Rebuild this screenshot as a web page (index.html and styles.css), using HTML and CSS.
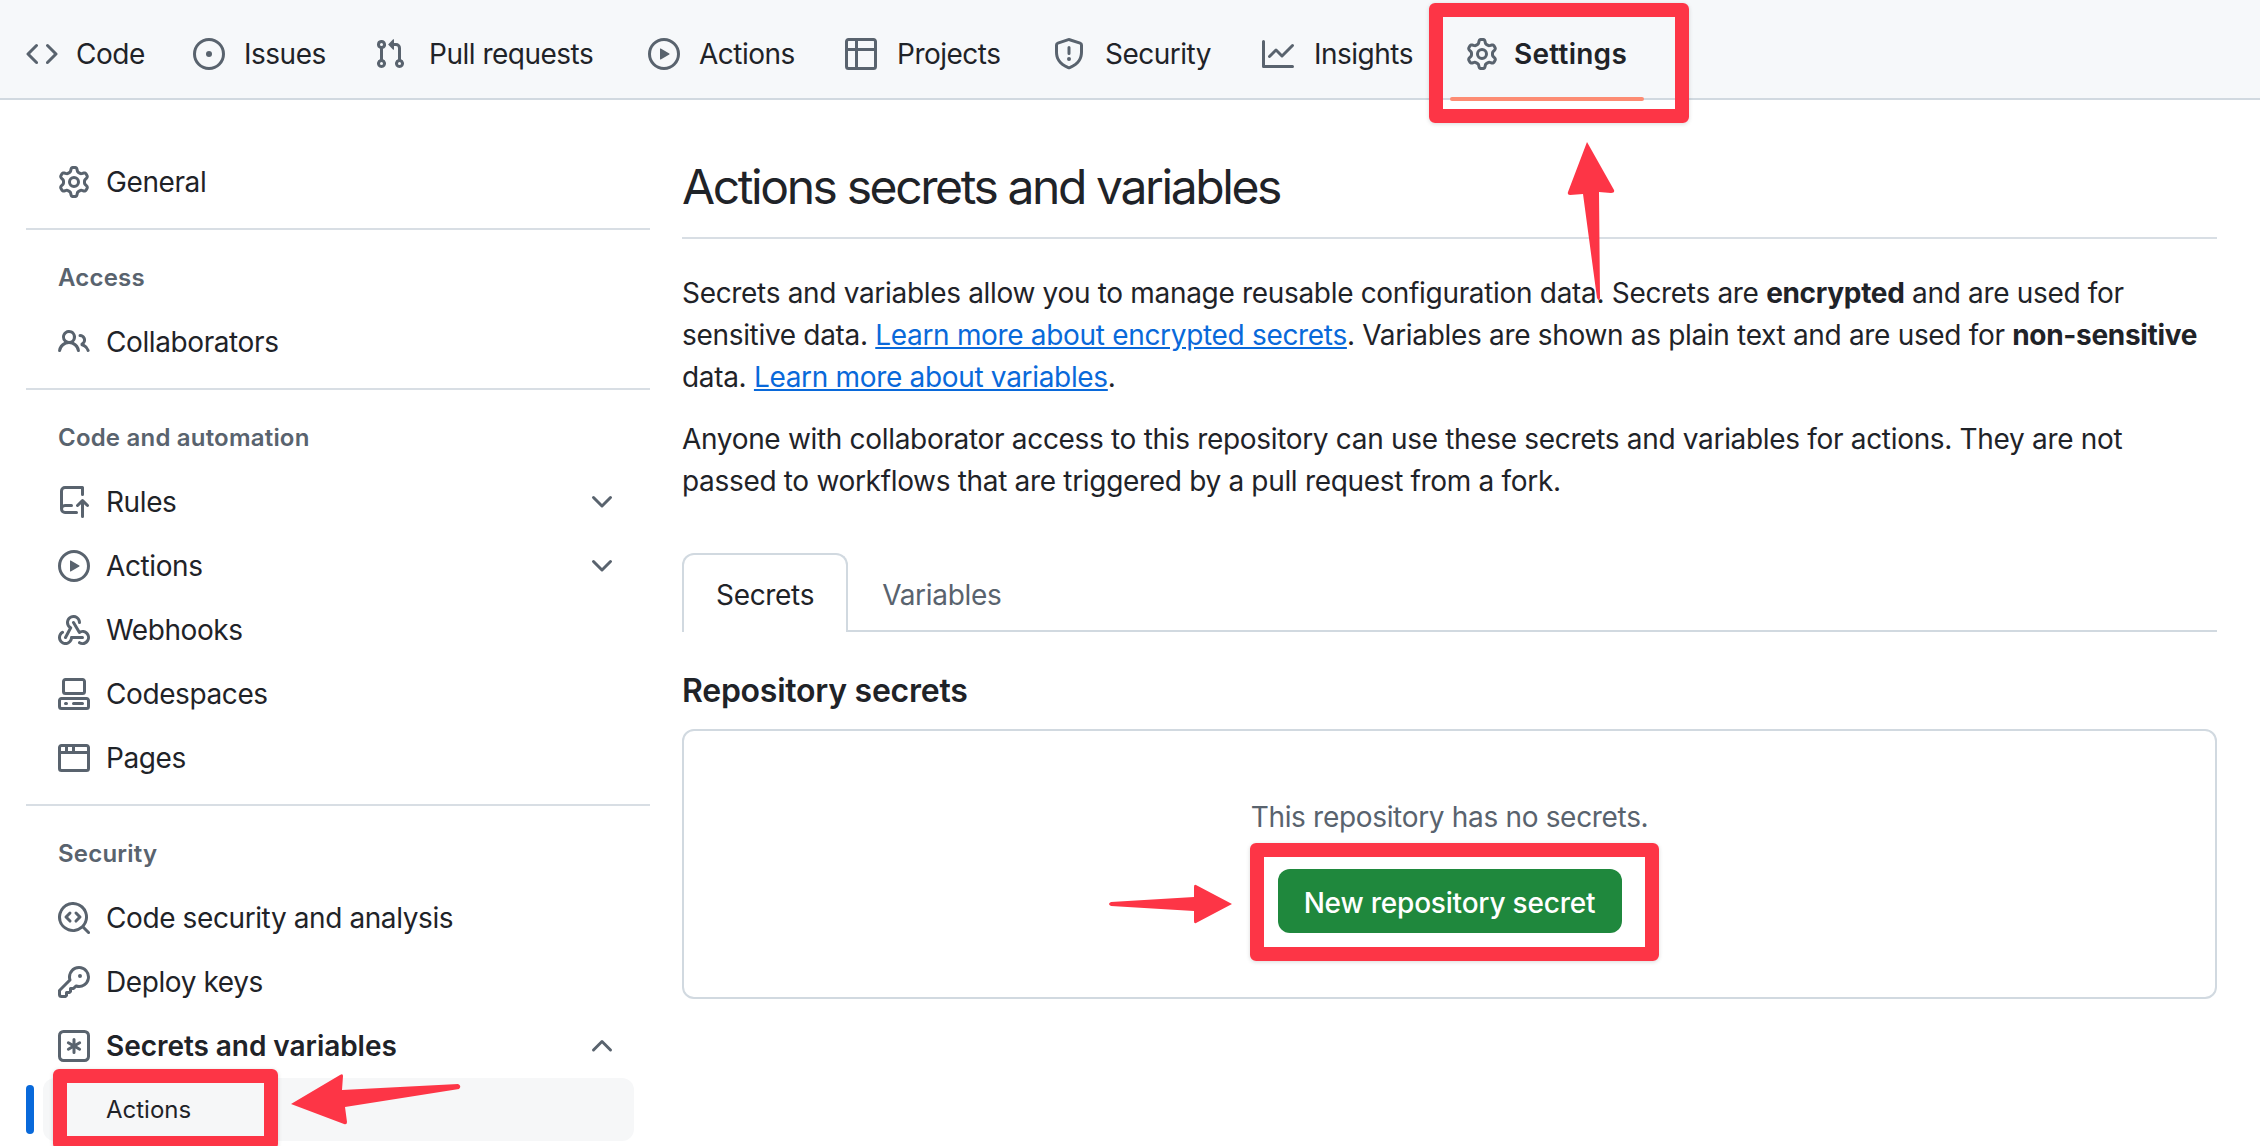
FILE: index.html
```html
<!DOCTYPE html>
<html lang="en">
<head>
    <meta charset="UTF-8">
    <title>Actions secrets and variables</title>
    <link rel="stylesheet" href="styles.css">
</head>
<body>
    <svg class="sprite" xmlns="http://www.w3.org/2000/svg">
        <symbol id="i-code" viewBox="0 0 16 16"><path d="M11.28 3.22a.75.75 0 0 0-1.06 1.06L13.94 8l-3.72 3.72a.749.749 0 0 0 .326 1.275.749.749 0 0 0 .734-.215l4.25-4.25a.75.75 0 0 0 0-1.06Zm-6.56 0a.751.751 0 0 1 1.042.018.751.751 0 0 1 .018 1.042L2.06 8l3.72 3.72a.749.749 0 0 1-.326 1.275.749.749 0 0 1-.734-.215L.47 8.53a.75.75 0 0 1 0-1.06Z"/></symbol>
        <symbol id="i-issue" viewBox="0 0 16 16"><path d="M8 9.5a1.5 1.5 0 1 0 0-3 1.5 1.5 0 0 0 0 3Z"/><path d="M8 0a8 8 0 1 1 0 16A8 8 0 0 1 8 0ZM1.5 8a6.5 6.5 0 1 0 13 0 6.5 6.5 0 0 0-13 0Z"/></symbol>
        <symbol id="i-pull" viewBox="0 0 16 16"><path d="M1.5 3.25a2.25 2.25 0 1 1 3 2.122v5.256a2.251 2.251 0 1 1-1.5 0V5.372A2.25 2.25 0 0 1 1.5 3.25Zm5.677-.177L9.573.677A.25.25 0 0 1 10 .854V2.5h1A2.5 2.5 0 0 1 13.5 5v5.628a2.251 2.251 0 1 1-1.5 0V5a1 1 0 0 0-1-1h-1v1.646a.25.25 0 0 1-.427.177L7.177 3.427a.25.25 0 0 1 0-.354ZM3.75 2.5a.75.75 0 1 0 0 1.5.75.75 0 0 0 0-1.5Zm0 9.5a.75.75 0 1 0 0 1.5.75.75 0 0 0 0-1.5Zm8.25.75a.75.75 0 1 0 1.5 0 .75.75 0 0 0-1.5 0Z"/></symbol>
        <symbol id="i-play" viewBox="0 0 16 16"><path d="M8 0a8 8 0 1 1 0 16A8 8 0 0 1 8 0ZM1.5 8a6.5 6.5 0 1 0 13 0 6.5 6.5 0 0 0-13 0Zm4.879-2.773 4.264 2.559a.25.25 0 0 1 0 .428l-4.264 2.559A.25.25 0 0 1 6 10.559V5.442a.25.25 0 0 1 .379-.215Z"/></symbol>
        <symbol id="i-table" viewBox="0 0 16 16"><path d="M0 1.75C0 .784.784 0 1.75 0h12.5C15.216 0 16 .784 16 1.75v12.5A1.75 1.75 0 0 1 14.25 16H1.75A1.75 1.75 0 0 1 0 14.25ZM6.5 6.5v8h7.75a.25.25 0 0 0 .25-.25V6.5Zm8-1.5V1.75a.25.25 0 0 0-.25-.25H6.5V5Zm-13 1.5v7.75c0 .138.112.25.25.25H5v-8ZM5 5V1.5H1.75a.25.25 0 0 0-.25.25V5Z"/></symbol>
        <symbol id="i-shield" viewBox="0 0 16 16"><path d="M7.467.133a1.748 1.748 0 0 1 1.066 0l5.25 1.68A1.75 1.75 0 0 1 15 3.48V7c0 1.566-.32 3.182-1.303 4.682-.983 1.498-2.585 2.813-5.032 3.855a1.697 1.697 0 0 1-1.33 0c-2.447-1.042-4.049-2.357-5.032-3.855C1.32 10.182 1 8.566 1 7V3.48a1.75 1.75 0 0 1 1.217-1.667Zm.61 1.429a.25.25 0 0 0-.153 0l-5.25 1.68a.25.25 0 0 0-.174.238V7c0 1.358.275 2.666 1.057 3.86.784 1.194 2.121 2.34 4.366 3.297a.196.196 0 0 0 .154 0c2.245-.956 3.582-2.104 4.366-3.298C13.225 9.666 13.5 8.36 13.5 7V3.48a.251.251 0 0 0-.174-.237l-5.25-1.68ZM8.75 4.75v3a.75.75 0 0 1-1.5 0v-3a.75.75 0 0 1 1.5 0ZM9 10.5a1 1 0 1 1-2 0 1 1 0 0 1 2 0Z"/></symbol>
        <symbol id="i-graph" viewBox="0 0 16 16"><path d="M1.5 1.75V13.5h13.75a.75.75 0 0 1 0 1.5H.75a.75.75 0 0 1-.75-.75V1.75a.75.75 0 0 1 1.5 0Zm14.28 2.53-5.25 5.25a.75.75 0 0 1-1.06 0L7 7.06 4.28 9.78a.751.751 0 0 1-1.042-.018.751.751 0 0 1-.018-1.042l3.25-3.25a.75.75 0 0 1 1.06 0L10 7.94l4.72-4.72a.751.751 0 0 1 1.042.018.751.751 0 0 1 .018 1.042Z"/></symbol>
        <symbol id="i-gear" viewBox="0 0 16 16"><path d="M8 0a8.2 8.2 0 0 1 .701.031C9.444.095 9.99.645 10.16 1.29l.288 1.107c.018.066.079.158.212.224.231.114.454.243.668.386.123.082.233.09.299.071l1.103-.303c.644-.176 1.392.021 1.82.63.27.385.506.792.704 1.218.315.675.111 1.422-.364 1.891l-.814.806c-.049.048-.098.147-.088.294.016.257.016.515 0 .772-.01.147.038.246.088.294l.814.806c.475.469.679 1.216.364 1.891a7.977 7.977 0 0 1-.704 1.217c-.428.61-1.176.807-1.82.63l-1.102-.302c-.067-.019-.177-.011-.3.071a5.909 5.909 0 0 1-.668.386c-.133.066-.194.158-.211.224l-.29 1.106c-.168.646-.715 1.196-1.458 1.26a8.006 8.006 0 0 1-1.402 0c-.743-.064-1.289-.614-1.458-1.26l-.289-1.106c-.018-.066-.079-.158-.212-.224a5.738 5.738 0 0 1-.668-.386c-.123-.082-.233-.09-.299-.071l-1.103.303c-.644.176-1.392-.021-1.82-.63a8.12 8.12 0 0 1-.704-1.218c-.315-.675-.111-1.422.363-1.891l.815-.806c.05-.048.098-.147.088-.294a6.214 6.214 0 0 1 0-.772c.01-.147-.038-.246-.088-.294l-.815-.806C.635 6.045.431 5.298.746 4.623a7.92 7.92 0 0 1 .704-1.217c.428-.61 1.176-.807 1.82-.63l1.102.302c.067.019.177.011.3-.071.214-.143.437-.272.668-.386.133-.066.194-.158.211-.224l.29-1.106C6.009.645 6.556.095 7.299.03 7.53.01 7.764 0 8 0Zm-.571 1.525c-.036.003-.108.036-.137.146l-.289 1.105c-.147.561-.549.967-.998 1.189-.173.086-.34.183-.5.29-.417.278-.97.423-1.529.27l-1.103-.303c-.109-.03-.175.016-.195.045-.22.312-.412.644-.573.99-.014.031-.021.11.059.19l.815.806c.411.406.562.957.53 1.456a4.709 4.709 0 0 0 0 .582c.032.499-.119 1.05-.53 1.456l-.815.806c-.081.08-.073.159-.059.19.162.346.353.677.573.989.02.03.085.076.195.046l1.102-.303c.56-.153 1.113-.008 1.53.27.161.107.328.204.501.29.447.222.85.629.997 1.189l.289 1.105c.029.109.101.143.137.146a6.6 6.6 0 0 0 1.142 0c.036-.003.108-.036.137-.146l.289-1.105c.147-.561.549-.967.998-1.189.173-.086.34-.183.5-.29.417-.278.97-.423 1.529-.27l1.103.303c.109.029.175-.016.195-.045.22-.313.411-.644.573-.99.014-.031.021-.11-.059-.19l-.815-.806c-.411-.406-.562-.957-.53-1.456a4.709 4.709 0 0 0 0-.582c-.032-.499.119-1.05.53-1.456l.815-.806c.081-.08.073-.159.059-.19a6.464 6.464 0 0 0-.573-.989c-.02-.03-.085-.076-.195-.046l-1.102.303c-.56.153-1.113.008-1.53-.27a4.44 4.44 0 0 0-.501-.29c-.447-.222-.85-.629-.997-1.189l-.289-1.105c-.029-.11-.101-.143-.137-.146a6.6 6.6 0 0 0-1.142 0ZM11 8a3 3 0 1 1-6 0 3 3 0 0 1 6 0ZM9.5 8a1.5 1.5 0 1 0-3.001.001A1.5 1.5 0 0 0 9.5 8Z"/></symbol>
        <symbol id="i-people" viewBox="0 0 16 16"><path d="M2 5.5a3.5 3.5 0 1 1 5.898 2.549 5.508 5.508 0 0 1 3.034 4.084.75.75 0 1 1-1.482.235 4 4 0 0 0-7.9 0 .75.75 0 0 1-1.482-.236A5.507 5.507 0 0 1 3.102 8.05 3.493 3.493 0 0 1 2 5.5ZM11 4a3.001 3.001 0 0 1 2.22 5.018 5.01 5.01 0 0 1 2.56 3.012.749.749 0 0 1-.885.954.752.752 0 0 1-.549-.514 3.507 3.507 0 0 0-2.522-2.372.75.75 0 0 1-.574-.73v-.352a.75.75 0 0 1 .416-.672A1.5 1.5 0 0 0 11 5.5.75.75 0 0 1 11 4Zm-5.5-.5a2 2 0 1 0-.001 3.999A2 2 0 0 0 5.5 3.5Z"/></symbol>
        <symbol id="i-rules" viewBox="0 0 16 16"><path d="M1 2.5A2.5 2.5 0 0 1 3.5 0h8.75a.75.75 0 0 1 .75.75v3.5a.75.75 0 0 1-1.5 0V1.5h-8a1 1 0 0 0-1 1v6.708A2.493 2.493 0 0 1 3.5 9h3.25a.75.75 0 0 1 0 1.5H3.5a1 1 0 0 0 0 2h5.75a.75.75 0 0 1 0 1.5H3.5A2.5 2.5 0 0 1 1 11.5Zm13.23 7.79h-.001l-1.224-1.224v6.184a.75.75 0 0 1-1.5 0V9.066L10.28 10.29a.75.75 0 0 1-1.06-1.061l2.505-2.504a.75.75 0 0 1 1.06 0L15.29 9.23a.751.751 0 0 1-.018 1.042.751.751 0 0 1-1.042.018Z"/></symbol>
        <symbol id="i-webhook" viewBox="0 0 16 16"><path d="M5.5 4.25a2.25 2.25 0 0 1 4.5 0 .75.75 0 0 0 1.5 0 3.75 3.75 0 1 0-6.14 2.889l-2.272 4.258a.75.75 0 0 0 1.324.706L7 7.25a.75.75 0 0 0-.309-1.015A2.25 2.25 0 0 1 5.5 4.25Z"/><path d="M7.364 3.607a.75.75 0 0 1 1.03.257l2.608 4.349a3.75 3.75 0 1 1-.628 6.785.75.75 0 0 1 .752-1.299 2.25 2.25 0 1 0-.033-3.88.75.75 0 0 1-1.03-.256L7.107 4.636a.75.75 0 0 1 .257-1.03Z"/><path d="M2.9 8.776A.75.75 0 0 1 2.625 9.8 2.25 2.25 0 1 0 6 11.75a.75.75 0 0 1 .75-.751h5.5a.75.75 0 0 1 0 1.5H7.425a3.751 3.751 0 1 1-5.55-3.998.75.75 0 0 1 1.024.274Z"/></symbol>
        <symbol id="i-codespaces" viewBox="0 0 16 16"><path d="M0 11.25c0-.966.784-1.75 1.75-1.75h12.5c.966 0 1.75.784 1.75 1.75v3A1.75 1.75 0 0 1 14.25 16H1.75A1.75 1.75 0 0 1 0 14.25Zm2-9.5C2 .784 2.784 0 3.75 0h8.5C13.216 0 14 .784 14 1.75v5a1.75 1.75 0 0 1-1.75 1.75h-8.5A1.75 1.75 0 0 1 2 6.75Zm1.75-.25a.25.25 0 0 0-.25.25v5c0 .138.112.25.25.25h8.5a.25.25 0 0 0 .25-.25v-5a.25.25 0 0 0-.25-.25Zm-2 9.5a.25.25 0 0 0-.25.25v3c0 .138.112.25.25.25h12.5a.25.25 0 0 0 .25-.25v-3a.25.25 0 0 0-.25-.25Z"/><path d="M7 12.75a.75.75 0 0 1 .75-.75h4.5a.75.75 0 0 1 0 1.5h-4.5a.75.75 0 0 1-.75-.75Zm-4 0a.75.75 0 0 1 .75-.75h.5a.75.75 0 0 1 0 1.5h-.5a.75.75 0 0 1-.75-.75Z"/></symbol>
        <symbol id="i-browser" viewBox="0 0 16 16"><path d="M0 2.75C0 1.784.784 1 1.75 1h12.5c.966 0 1.75.784 1.75 1.75v10.5A1.75 1.75 0 0 1 14.25 15H1.75A1.75 1.75 0 0 1 0 13.25ZM14.5 6h-13v7.25c0 .138.112.25.25.25h12.5a.25.25 0 0 0 .25-.25Zm-6-3.5v2h6V2.75a.25.25 0 0 0-.25-.25ZM5 2.5v2h2v-2Zm-3.25 0a.25.25 0 0 0-.25.25V4.5h2v-2Z"/></symbol>
        <symbol id="i-codescan" viewBox="0 0 16 16"><path d="M8.47 4.97a.75.75 0 0 0 0 1.06L9.94 7.5 8.47 8.97a.75.75 0 1 0 1.06 1.06l2-2a.75.75 0 0 0 0-1.06l-2-2a.75.75 0 0 0-1.06 0ZM6.53 6.03a.75.75 0 0 0-1.06-1.06l-2 2a.75.75 0 0 0 0 1.06l2 2a.75.75 0 1 0 1.06-1.06L5.06 7.5l1.47-1.47Z"/><path d="M12.246 13.307a7.501 7.501 0 1 1 1.06-1.06l2.474 2.473a.749.749 0 0 1-.326 1.275.749.749 0 0 1-.734-.215ZM1.5 7.5a6.002 6.002 0 0 0 3.608 5.504 6.002 6.002 0 0 0 6.486-1.117.748.748 0 0 1 .292-.293A6 6 0 1 0 1.5 7.5Z"/></symbol>
        <symbol id="i-key" viewBox="0 0 16 16"><path d="M10.5 0a5.499 5.499 0 1 1-1.288 10.848l-.932.932a.749.749 0 0 1-.53.22H7v.75a.749.749 0 0 1-.22.53l-.5.5a.749.749 0 0 1-.53.22H5v.75a.749.749 0 0 1-.22.53l-.5.5a.749.749 0 0 1-.53.22h-2A1.75 1.75 0 0 1 0 14.25v-2c0-.199.079-.389.22-.53l4.932-4.932A5.5 5.5 0 0 1 10.5 0Zm-4 5.5c-.001.431.069.86.205 1.269a.75.75 0 0 1-.181.768L1.5 12.56v1.69c0 .138.112.25.25.25h1.69l.06-.06v-1.19a.75.75 0 0 1 .75-.75h1.19l.06-.06v-1.19a.75.75 0 0 1 .75-.75h1.19l1.023-1.025a.75.75 0 0 1 .768-.18A4 4 0 1 0 6.5 5.5ZM11 6a1 1 0 1 1 0-2 1 1 0 0 1 0 2Z"/></symbol>
        <symbol id="i-asterisk" viewBox="0 0 16 16"><path d="M0 2.75A2.75 2.75 0 0 1 2.75 0h10.5A2.75 2.75 0 0 1 16 2.75v10.5A2.75 2.75 0 0 1 13.25 16H2.75A2.75 2.75 0 0 1 0 13.25ZM2.75 1.5c-.69 0-1.25.56-1.25 1.25v10.5c0 .69.56 1.25 1.25 1.25h10.5c.69 0 1.25-.56 1.25-1.25V2.75c0-.69-.56-1.25-1.25-1.25Z"/><path d="M8 4a.75.75 0 0 1 .75.75V6.7l1.69-.975a.75.75 0 0 1 .75 1.3L9.5 8l1.69.976a.75.75 0 0 1-.75 1.298L8.75 9.3v1.95a.75.75 0 0 1-1.5 0V9.299l-1.69.975a.75.75 0 0 1-.75-1.3L6.5 8l-1.69-.975a.75.75 0 0 1 .75-1.3l1.69.976V4.75A.75.75 0 0 1 8 4Z"/></symbol>
        <symbol id="i-down" viewBox="0 0 16 16"><path d="M12.78 5.22a.749.749 0 0 1 0 1.06l-4.25 4.25a.749.749 0 0 1-1.06 0L3.22 6.28a.749.749 0 1 1 1.06-1.06L8 8.939l3.72-3.719a.749.749 0 0 1 1.06 0Z"/></symbol>
        <symbol id="i-up" viewBox="0 0 16 16"><path d="M3.22 10.53a.749.749 0 0 1 0-1.06l4.25-4.25a.749.749 0 0 1 1.06 0l4.25 4.25a.749.749 0 0 1-1.06 1.06L8 6.811 4.28 10.53a.749.749 0 0 1-1.06 0Z"/></symbol>
    </svg>

    <nav class="repo-nav">
        <a class="tab"><svg class="icon"><use href="#i-code"/></svg>Code</a>
        <a class="tab"><svg class="icon"><use href="#i-issue"/></svg>Issues</a>
        <a class="tab"><svg class="icon"><use href="#i-pull"/></svg>Pull requests</a>
        <a class="tab"><svg class="icon"><use href="#i-play"/></svg>Actions</a>
        <a class="tab"><svg class="icon"><use href="#i-table"/></svg>Projects</a>
        <a class="tab"><svg class="icon"><use href="#i-shield"/></svg>Security</a>
        <a class="tab"><svg class="icon"><use href="#i-graph"/></svg>Insights</a>
        <a class="tab tab-current"><svg class="icon"><use href="#i-gear"/></svg>Settings</a>
    </nav>

    <div class="page">
        <aside class="sidebar">
            <div class="side-group">
                <a class="side-item"><svg class="icon"><use href="#i-gear"/></svg>General</a>
            </div>
            <div class="side-group">
                <h3 class="side-title">Access</h3>
                <a class="side-item"><svg class="icon"><use href="#i-people"/></svg>Collaborators</a>
            </div>
            <div class="side-group">
                <h3 class="side-title">Code and automation</h3>
                <a class="side-item"><svg class="icon"><use href="#i-rules"/></svg>Rules<svg class="icon chevron"><use href="#i-down"/></svg></a>
                <a class="side-item"><svg class="icon"><use href="#i-play"/></svg>Actions<svg class="icon chevron"><use href="#i-down"/></svg></a>
                <a class="side-item"><svg class="icon"><use href="#i-webhook"/></svg>Webhooks</a>
                <a class="side-item"><svg class="icon"><use href="#i-codespaces"/></svg>Codespaces</a>
                <a class="side-item"><svg class="icon"><use href="#i-browser"/></svg>Pages</a>
            </div>
            <div class="side-group side-last">
                <h3 class="side-title">Security</h3>
                <a class="side-item"><svg class="icon"><use href="#i-codescan"/></svg>Code security and analysis</a>
                <a class="side-item"><svg class="icon"><use href="#i-key"/></svg>Deploy keys</a>
                <a class="side-item side-open"><svg class="icon"><use href="#i-asterisk"/></svg>Secrets and variables<svg class="icon chevron"><use href="#i-up"/></svg></a>
                <div class="sub-row">
                    <span class="sub-bar"></span>
                    <a class="sub-item">Actions</a>
                </div>
            </div>
        </aside>

        <main class="content">
            <h1 class="page-title">Actions secrets and variables</h1>
            <p class="text">Secrets and variables allow you to manage reusable configuration data. Secrets are <b>encrypted</b> and are used for sensitive data. <a class="link">Learn more about encrypted secrets</a>. Variables are shown as plain text and are used for <b>non-sensitive</b> data. <a class="link">Learn more about variables</a>.</p>
            <p class="text">Anyone with collaborator access to this repository can use these secrets and variables for actions. They are not<br>passed to workflows that are triggered by a pull request from a fork.</p>

            <div class="tabnav">
                <a class="tabnav-tab tabnav-current">Secrets</a>
                <a class="tabnav-tab">Variables</a>
            </div>

            <h2 class="section-title">Repository secrets</h2>
            <div class="blank-box">
                <p class="blank-text">This repository has no secrets.</p>
                <a class="btn-green">New repository secret</a>
            </div>
        </main>
    </div>

    <!-- red annotations drawn on top of the screenshot -->
    <div class="mark mark-settings"></div>
    <div class="mark mark-button"></div>
    <div class="mark mark-actions"></div>
    <svg class="arrows" width="2260" height="1146" viewBox="0 0 2260 1146">
        <path d="M1587 142 L1614 190 Q1615 193 1611 193 L1599 192 L1600 298 Q1599 302 1597 298 L1583 194 L1570 195 Q1567 195 1568 192 Z"/>
        <path d="M1232 904 L1196 923 Q1194 924 1194 921 L1194 911 L1111 906 Q1107 904 1111 902 L1194 897 L1194 887 Q1194 884 1196 885 Z"/>
        <path d="M291 1104 L340 1075 Q343 1073 343 1076 L342 1090 L458 1084 Q462 1086 459 1089 L345 1107 L347 1122 Q347 1125 344 1124 Z"/>
    </svg>
</body>
</html>
```

FILE: styles.css
```css
html, body {
    height: 1146px;
    overflow: hidden;
}
body {
    margin: 0;
    font-family: Inter, "Noto Sans", sans-serif;
    font-size: 28px;
    line-height: 42px;
    letter-spacing: -0.32px;
    color: #1f2328;
    background-color: #fff;
}
.sprite {
    display: none;
}
.icon {
    width: 32px;
    height: 32px;
    flex: none;
    fill: #59636e;
}

/* top tabs */
.repo-nav {
    display: flex;
    align-items: center;
    height: 88px;
    padding: 10px 0 0 26px;
    letter-spacing: -0.5px;
    background-color: #f6f8fa;
    border-bottom: 2px solid #d1d9e0;
}
.tab {
    display: flex;
    align-items: center;
    gap: 20px;
    white-space: nowrap;
}
/* tab widths measured off the screenshot, the spacing there is not even */
.tab:nth-child(1) { width: 167px; gap: 18px; }
.tab:nth-child(2) { width: 181px; gap: 19px; }
.tab:nth-child(3) { width: 274px; gap: 23px; }
.tab:nth-child(4) { width: 197px; gap: 19px; }
.tab:nth-child(5) { width: 208px; }
.tab:nth-child(6) { width: 209px; }
.tab:nth-child(7) { width: 204px; }
.tab-current {
    position: relative;
    gap: 16px;
    font-weight: 600;
    letter-spacing: 0.25px;
}
.tab-current::after {
    content: "";
    position: absolute;
    left: -16px;
    right: -17px;
    bottom: -26px;
    height: 4px;
    border-radius: 2px;
    background-color: #fd8c73;
}

/* layout */
.page {
    display: flex;
    padding: 50px 43px 0 26px;
}
.sidebar {
    width: 624px;
    flex: none;
}
.content {
    flex: 1;
    min-width: 0;
    margin-left: 32px;
    margin-top: 7px;
}

/* sidebar */
.side-group {
    padding-bottom: 14px;
    margin-bottom: 27px;
    border-bottom: 2px solid #d8dee4;
}
.side-last {
    border-bottom: none;
    margin-bottom: 0;
    padding-bottom: 0;
}
.side-title {
    margin: 0 0 11px 32px;
    font-size: 24px;
    line-height: 42px;
    font-weight: 600;
    letter-spacing: 0.2px;
    color: #59636e;
}
.side-item {
    display: flex;
    align-items: center;
    gap: 16px;
    height: 64px;
    padding: 0 32px;
    letter-spacing: -0.4px;
}
.side-open {
    font-weight: 600;
    letter-spacing: -0.05px;
}
.chevron {
    margin-left: auto;
}
.sub-row {
    display: flex;
    align-items: center;
    gap: 9px;
}
.sub-bar {
    width: 8px;
    height: 49px;
    border-radius: 4px;
    background-color: #0969da;
}
.sub-item {
    display: flex;
    align-items: center;
    width: 528px;
    height: 63px;
    padding-left: 63px;
    border-radius: 12px;
    font-size: 24px;
    letter-spacing: 0;
    background-color: #f6f7f8;
}

/* main column */
.page-title {
    margin: 0 0 33px;
    padding-bottom: 20px;
    font-size: 48px;
    line-height: 60px;
    font-weight: 400;
    letter-spacing: -2.4px;
    border-bottom: 2px solid #d8dee4;
}
.text {
    margin: 0 0 20px;
}
.link {
    color: #0969da;
    text-decoration: underline;
}
.tabnav {
    display: flex;
    margin-top: 51px;
    border-bottom: 2px solid #d1d9e0;
}
.tabnav-tab {
    padding: 19px 32px 14px;
    margin-bottom: -2px;
    color: #59636e;
    border: 2px solid transparent;
    border-bottom: none;
}
.tabnav-current {
    color: #1f2328;
    background-color: #fff;
    border-color: #d1d9e0;
    border-radius: 12px 12px 0 0;
    padding-bottom: 16px;
}
.section-title {
    margin: 38px 0 17px;
    font-size: 32px;
    line-height: 42px;
    font-weight: 600;
    letter-spacing: -0.25px;
}
.blank-box {
    display: flex;
    flex-direction: column;
    align-items: center;
    box-sizing: border-box;
    height: 270px;
    padding-top: 65px;
    border: 2px solid #d1d9e0;
    border-radius: 12px;
}
.blank-text {
    margin: 0 0 31px;
    color: #59636e;
}
.btn-green {
    display: flex;
    align-items: center;
    justify-content: center;
    box-sizing: border-box;
    width: 344px;
    height: 64px;
    padding-top: 3px;
    border-radius: 12px;
    color: #fff;
    font-weight: 500;
    letter-spacing: -0.2px;
    background-color: #1f883d;
}

/* annotations */
.mark {
    position: absolute;
    border: 14px solid #fd3546;
    border-radius: 6px;
    box-shadow: 0 1px 4px rgba(0, 0, 0, 0.15);
}
.mark-settings {
    left: 1429px;
    top: 3px;
    width: 232px;
    height: 92px;
}
.mark-button {
    left: 1250px;
    top: 843px;
    width: 381px;
    height: 90px;
}
.mark-actions {
    left: 53px;
    top: 1069px;
    width: 197px;
    height: 53px;
}
.arrows {
    position: absolute;
    left: 0;
    top: 0;
    fill: #fd3546;
    pointer-events: none;
}
```
